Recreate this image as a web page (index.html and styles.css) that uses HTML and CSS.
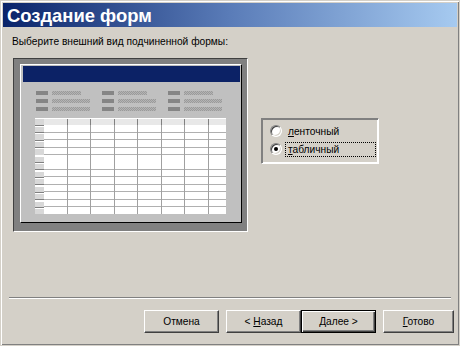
FILE: index.html
```html
<!DOCTYPE html>
<html lang="ru">
<head>
  <meta charset="UTF-8" />
  <title>Создание форм</title>
  <link rel="stylesheet" href="styles.css">
</head>
<body>

  <div class="window">
    <div class="titlebar">Создание форм</div>

    <div class="prompt">Выберите внешний вид подчиненной формы:</div>

    <div class="main">
      <div class="preview">
        <div class="sheet">
          <div class="sheet-head"></div>

          <div class="fields">
            <div class="field-col">
              <div class="field"><span class="lbl"></span><span class="val short"></span></div>
              <div class="field"><span class="lbl"></span><span class="val"></span></div>
              <div class="field"><span class="lbl"></span><span class="val"></span></div>
            </div>
            <div class="field-col">
              <div class="field"><span class="lbl"></span><span class="val short"></span></div>
              <div class="field"><span class="lbl"></span><span class="val"></span></div>
              <div class="field"><span class="lbl"></span><span class="val"></span></div>
            </div>
            <div class="field-col">
              <div class="field"><span class="lbl"></span><span class="val short"></span></div>
              <div class="field"><span class="lbl"></span><span class="val"></span></div>
              <div class="field"><span class="lbl"></span><span class="val"></span></div>
            </div>
          </div>

          <div class="grid">
            <div class="selectors"></div>
            <div class="cells">
              <div class="cells-head"></div>
              <div class="cells-body"></div>
            </div>
          </div>
        </div>
      </div>

      <div class="options">
        <label class="option"><span class="radio"></span><span class="opt-text"><u>л</u>енточный</span></label>
        <label class="option"><span class="radio checked"></span><span class="opt-text focus"><u>т</u>абличный</span></label>
      </div>
    </div>

    <div class="separator"></div>

    <div class="buttons">
      <button class="btn">Отмена</button>
      <div class="pair">
        <button class="btn">&lt; <u>Н</u>азад</button>
        <button class="btn default"><u>Д</u>алее &gt;</button>
      </div>
      <button class="btn finish"><u>Г</u>отово</button>
    </div>
  </div>

</body>
</html>
```

FILE: styles.css
```css
* {
  box-sizing: border-box;
}

body {
  margin: 0;
  background: #d4d0c8;
  font-family: 'Liberation Sans', Arial, sans-serif;
  font-size: 10.2px;
  color: #000;
}

.window {
  width: 460px;
  height: 346px;
  border: 1px solid #d4d0c8;
  box-shadow: inset 1px 1px #fff, inset -1px -1px #808080;
  padding: 2px 2px 0 2px;
  display: flex;
  flex-direction: column;
}

.titlebar {
  height: 24px;
  padding-left: 4px;
  background: linear-gradient(to right, #0a246a, #5a7cb8 50%, #a6caf0);
  color: #fff;
  font-weight: bold;
  font-size: 18.4px;
  line-height: 25px;
}

.prompt {
  margin: 8px 0 0 9px;
  line-height: 13px;
}

.main {
  display: flex;
  align-items: center;
  margin-top: 10px;
}

/* --- preview picture --- */

.preview {
  margin-left: 10px;
  width: 235px;
  height: 174px;
  background: #808080;
  border: 1px solid;
  border-color: #404040 #fff #fff #404040;
  padding: 5px 5px 8px 6px;
}

.sheet {
  height: 100%;
  background: #c0c0c0;
  border: 1px solid;
  border-color: #fff #000 #000 #fff;
  padding: 1px 1px 0 2px;
}

.sheet-head {
  height: 16px;
  background: #0c2266;
}

.fields {
  display: flex;
  margin: 9px 0 0 13px;
}

.field-col {
  width: 66px;
  display: flex;
  flex-direction: column;
  gap: 4px;
}

.field {
  display: flex;
  gap: 4px;
  height: 4px;
}

.lbl {
  width: 12px;
  background: #858585;
}

.val {
  width: 38px;
  background: repeating-conic-gradient(#9a9a9a 0 25%, #b4b4b4 0 50%) 0 0 / 2px 2px;
}

.val.short {
  width: 29px;
}

.grid {
  display: flex;
  margin: 7px 0 0 12px;
  height: 96px;
}

.selectors {
  width: 9px;
  background:
    repeating-linear-gradient(to bottom, #fff 0 1px, #d8d8d8 1px 6.5px, #808080 6.5px 7.5px);
}

.cells {
  width: 182px;
  display: flex;
  flex-direction: column;
}

.cells-head {
  height: 7px;
  background:
    repeating-linear-gradient(to right, #e8e8e8 0 22.5px, #808080 22.5px 23.5px);
  border-top: 1px solid #fff;
}

.cells-body {
  flex: 1;
  background:
    repeating-linear-gradient(to right, transparent 0 22.5px, #a0a0a0 22.5px 23.5px),
    repeating-linear-gradient(to bottom, #fff 0 6.5px, #b0b0b0 6.5px 7.5px);
}

/* --- choice box --- */

.options {
  margin-left: 13px;
  margin-top: -8px;
  width: 118px;
  height: 46px;
  border: 1px solid;
  border-color: #808080 #fff #fff #808080;
  box-shadow: 1px 1px 0 #808080 inset, -1px -1px 0 #fff inset;
  padding: 5px 0 0 8px;
  display: flex;
  flex-direction: column;
  gap: 4px;
}

.option {
  display: flex;
  align-items: center;
  height: 14px;
}

.radio {
  width: 12px;
  height: 12px;
  border-radius: 50%;
  background: #fff;
  border: 1px solid;
  border-color: #808080 #fff #fff #808080;
  box-shadow: inset 1px 1px #404040, inset -1px -1px #d4d0c8;
  position: relative;
}

.radio.checked::after {
  content: "";
  position: absolute;
  left: 3px;
  top: 3px;
  width: 4px;
  height: 4px;
  border-radius: 50%;
  background: #000;
}

.opt-text {
  margin-left: 3px;
  padding: 1px 2px;
  border: 1px solid transparent;
}

.opt-text.focus {
  border: 1px dotted #000;
  width: 91px;
}

/* --- bottom --- */

.separator {
  margin: auto 6px 0 6px;
  height: 2px;
  border-top: 1px solid #808080;
  border-bottom: 1px solid #fff;
}

.buttons {
  display: flex;
  align-items: center;
  gap: 7px;
  padding: 11px 0 12px 141px;
}

.pair {
  display: flex;
}

.btn {
  width: 75px;
  height: 23px;
  font: inherit;
  color: #000;
  background: #d4d0c8;
  border: 1px solid;
  border-color: #fff #404040 #404040 #fff;
  box-shadow: inset -1px -1px #808080;
  padding: 0;
}

.btn.finish {
  width: 71px;
}

.btn.default {
  border: 1px solid #000;
  box-shadow: inset 1px 1px #fff, inset -1px -1px #404040, inset -2px -2px #808080;
}
```
